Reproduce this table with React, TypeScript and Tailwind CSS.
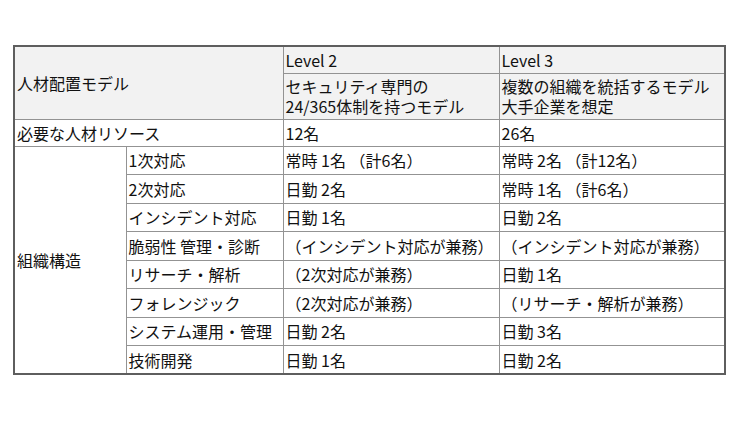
import React from 'react'

// Staffing model comparison table (Level 2 / Level 3)

type Row = { role: string; l2: string; l3: string }

const rows: Row[] = [
  { role: '1次対応', l2: '常時 1名 （計6名）', l3: '常時 2名 （計12名）' },
  { role: '2次対応', l2: '日勤 2名', l3: '常時 1名 （計6名）' },
  { role: 'インシデント対応', l2: '日勤 1名', l3: '日勤 2名' },
  { role: '脆弱性 管理・診断', l2: '（インシデント対応が兼務）', l3: '（インシデント対応が兼務）' },
  { role: 'リサーチ・解析', l2: '（2次対応が兼務）', l3: '日勤 1名' },
  { role: 'フォレンジック', l2: '（2次対応が兼務）', l3: '（リサーチ・解析が兼務）' },
  { role: 'システム運用・管理', l2: '日勤 2名', l3: '日勤 3名' },
  { role: '技術開発', l2: '日勤 1名', l3: '日勤 2名' },
]

const cell = 'border border-[#939393] px-[2px] py-0 align-middle text-left font-normal'

export default function App() {
  return (
    <div
      className="w-[750px] h-[422px] bg-white pt-[45px] pl-[13px] text-[16px] leading-[20px] text-[#111111]"
      style={{ fontFamily: '"Noto Sans CJK JP", "Noto Sans", sans-serif' }}
    >
      <table className="table-fixed border-collapse border-2 border-[#5e5e5e] w-[711px]">
        <colgroup>
          <col className="w-[112px]" />
          <col className="w-[157px]" />
          <col className="w-[216px]" />
          <col className="w-[226px]" />
        </colgroup>
        <tbody>
          {/* Header */}
          <tr className="h-[27px] bg-[#f2f2f2]">
            <th colSpan={2} rowSpan={2} className={cell}>
              人材配置モデル
            </th>
            <th className={cell}>Level 2</th>
            <th className={cell}>Level 3</th>
          </tr>
          <tr className="h-[46px] bg-[#f2f2f2]">
            <th className={cell}>
              <div className="flex flex-col">
                <span>セキュリティ専門の</span>
                <span>24/365体制を持つモデル</span>
              </div>
            </th>
            <th className={cell}>
              <div className="flex flex-col">
                <span>複数の組織を統括するモデル</span>
                <span>大手企業を想定</span>
              </div>
            </th>
          </tr>

          {/* Resources */}
          <tr className="h-[27px]">
            <td colSpan={2} className={cell}>
              必要な人材リソース
            </td>
            <td className={cell}>12名</td>
            <td className={cell}>26名</td>
          </tr>

          {/* Organisation */}
          {rows.map((r, i) => (
            <tr key={r.role} className="h-[28.5px]">
              {i === 0 && (
                <td rowSpan={rows.length} className={cell}>
                  組織構造
                </td>
              )}
              <td className={`${cell} whitespace-nowrap`}>{r.role}</td>
              <td className={`${cell} whitespace-nowrap`}>{r.l2}</td>
              <td className={`${cell} whitespace-nowrap`}>{r.l3}</td>
            </tr>
          ))}
        </tbody>
      </table>
    </div>
  )
}
